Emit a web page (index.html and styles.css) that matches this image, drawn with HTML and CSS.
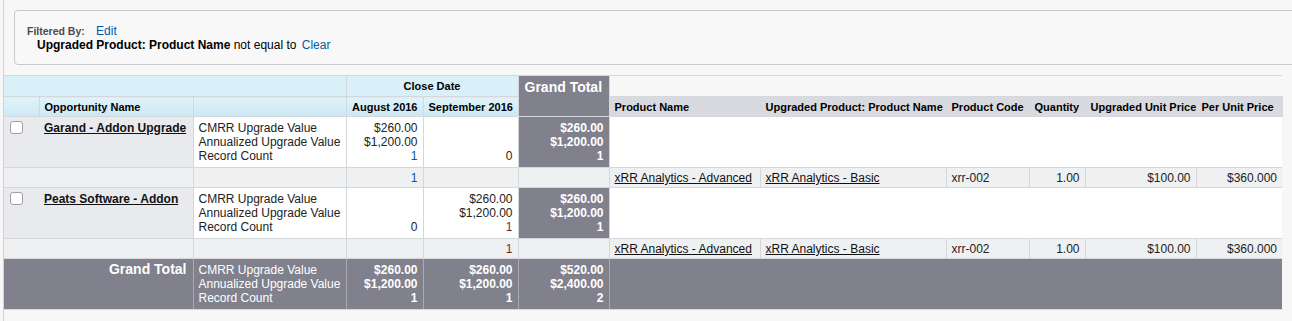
FILE: index.html
```html
<!DOCTYPE html>
<html>
<head>
<meta charset="utf-8">
<link rel="stylesheet" href="styles.css">
</head>
<body>
<div class="page">
  <div class="filter-box">
    <div class="filter-line1"><span class="filter-label">Filtered By:</span> <a class="link">Edit</a></div>
    <div class="filter-line2"><b>Upgraded Product: Product Name</b> not equal to <a class="link">Clear</a></div>
  </div>

  <table class="report">
    <colgroup>
      <col style="width:35px"><col style="width:154px"><col style="width:153px"><col style="width:77px"><col style="width:95px"><col style="width:91px"><col style="width:151px"><col style="width:186px"><col style="width:83px"><col style="width:56px"><col style="width:111px"><col style="width:86px">
    </colgroup>
    <tr class="h1">
      <th colspan="3" class="blue"></th>
      <th colspan="2" class="blue center">Close Date</th>
      <th rowspan="2" class="gt-head">Grand Total</th>
      <th colspan="6" class="empty-head"></th>
    </tr>
    <tr class="h2">
      <th class="blue"></th>
      <th class="blue left">Opportunity Name</th>
      <th class="blue"></th>
      <th class="blue right">August 2016</th>
      <th class="blue right">September 2016</th>
      <th class="grey left">Product Name</th>
      <th class="grey left">Upgraded Product: Product Name</th>
      <th class="grey left">Product Code</th>
      <th class="grey left">Quantity</th>
      <th class="grey left">Upgraded Unit Price</th>
      <th class="grey left">Per Unit Price</th>
    </tr>
    <tr class="data">
      <td class="chk"><span class="checkbox"></span></td>
      <td class="opp"><a class="opp-link">Garand - Addon Upgrade</a></td>
      <td class="labels">CMRR Upgrade Value<br>Annualized Upgrade Value<br>Record Count</td>
      <td class="num">$260.00<br>$1,200.00<br><span class="blue-num">1</span></td>
      <td class="num"><br><br>0</td>
      <td class="num gt">$260.00<br>$1,200.00<br>1</td>
      <td colspan="6" class="blank"></td>
    </tr>
    <tr class="sub">
      <td colspan="2"></td>
      <td></td>
      <td class="num"><span class="blue-num">1</span></td>
      <td></td>
      <td></td>
      <td><a class="plink">xRR Analytics - Advanced</a></td>
      <td><a class="plink">xRR Analytics - Basic</a></td>
      <td>xrr-002</td>
      <td class="num">1.00</td>
      <td class="num">$100.00</td>
      <td class="num">$360.000</td>
    </tr>
    <tr class="data">
      <td class="chk"><span class="checkbox"></span></td>
      <td class="opp"><a class="opp-link">Peats Software - Addon</a></td>
      <td class="labels">CMRR Upgrade Value<br>Annualized Upgrade Value<br>Record Count</td>
      <td class="num"><br><br>0</td>
      <td class="num">$260.00<br>$1,200.00<br><span class="red-num">1</span></td>
      <td class="num gt">$260.00<br>$1,200.00<br>1</td>
      <td colspan="6" class="blank"></td>
    </tr>
    <tr class="sub">
      <td colspan="2"></td>
      <td></td>
      <td></td>
      <td class="num"><span class="red-num">1</span></td>
      <td></td>
      <td><a class="plink">xRR Analytics - Advanced</a></td>
      <td><a class="plink">xRR Analytics - Basic</a></td>
      <td>xrr-002</td>
      <td class="num">1.00</td>
      <td class="num">$100.00</td>
      <td class="num">$360.000</td>
    </tr>
    <tr class="total">
      <td colspan="2" class="total-label">Grand Total</td>
      <td class="tl">CMRR Upgrade Value<br>Annualized Upgrade Value<br>Record Count</td>
      <td class="num b">$260.00<br>$1,200.00<br>1</td>
      <td class="num b">$260.00<br>$1,200.00<br>1</td>
      <td class="num b">$520.00<br>$2,400.00<br>2</td>
      <td colspan="6" class="total-rest"></td>
    </tr>
  </table>
</div>
</body>
</html>
```

FILE: styles.css
```css
html, body {
  margin: 0;
  padding: 0;
  background: #f7f7f7;
  overflow: hidden;
}
body {
  font-family: "Liberation Sans", Arial, sans-serif;
  font-size: 12px;
  color: #222;
}
.page {
  margin-left: 3px;
  border-left: 1px solid #d2d2d2;
  min-height: 321px;
  padding-top: 10px;
}
.filter-box {
  margin-left: 10px;
  margin-right: -30px;
  height: 53px;
  border: 1px solid #c9c9c9;
  border-radius: 4px;
  background: #f8f8f8;
  box-sizing: content-box;
  padding: 0 0 0 12px;
}
.filter-line1 {
  padding-top: 13px;
  height: 14px;
  line-height: 14px;
  color: #333;
}
.filter-label {
  font-weight: bold;
  font-size: 10.5px;
  color: #4a4a56;
  margin-right: 6px;
}
.filter-line2 {
  padding-left: 10px;
  line-height: 14px;
  color: #000;
}
.link {
  color: #015ba7;
  text-decoration: none;
  margin-left: 2px;
}
.report {
  margin-top: 10px;
  border-collapse: collapse;
  table-layout: fixed;
  width: 1278px;
  line-height: 14px;
}
.report th, .report td {
  padding: 0 5px;
  vertical-align: top;
  white-space: nowrap;
  overflow: hidden;
}
.report th {
  font-size: 11px;
  font-weight: bold;
  color: #000;
}
.h1 th {
  height: 21px;
  box-sizing: border-box;
  padding-top: 3px;
  border-top: 1px solid #d4d8dc;
}
.h2 th {
  height: 20px;
  box-sizing: border-box;
  padding-top: 3px;
  vertical-align: top;
  border: 1px solid #d4d8dc;
}
.h2 th:first-child { border-left: none; }
.blue {
  background: linear-gradient(#e0f3fa, #cbe9f4);
}
.h1 th.blue {
  background: #d9f0f8;
}
.grey {
  background: #d8dadf;
}
.center { text-align: center; }
.left { text-align: left; }
.right { text-align: right; }
.h1 th.center {
  border-left: 1px solid #d4d8dc;
  border-bottom: 1px solid #d4d8dc;
}
.gt-head {
  background: #80818d;
  color: #fff !important;
  font-size: 14px !important;
  text-align: left;
  padding-top: 4px !important;
  padding-left: 6px !important;
  border-left: 1px solid #d4d8dc;
  border-right: 1px solid #d4d8dc;
  vertical-align: top;
}
.empty-head {
  background: transparent;
}
.data td {
  padding-top: 4px;
  padding-bottom: 4px;
  background: #fff;
  border: 1px solid #d4d8dc;
  color: #222;
}
.data td.chk {
  background: #e9eaee;
  border-right: none;
  border-left: none;
  padding-left: 6px;
}
.data td.opp {
  background: #e9eaee;
  border-left: none;
}
.checkbox {
  display: block;
  width: 11px;
  height: 11px;
  border: 1px solid #a0a0a0;
  border-radius: 3px;
  background: #fff;
}
.opp-link {
  font-weight: bold;
  color: #111;
  text-decoration: underline;
}
.labels { color: #222; }
.num { text-align: right; }
.data td.gt {
  background: #80818d;
  color: #fff;
  font-weight: bold;
}
.data td.blank {
  border-left: 1px solid #d4d8dc;
  border-right: none;
}
.blue-num { color: #015ba7; }
.red-num { color: #6a2d2d; }
.sub td {
  padding-top: 3px;
  padding-bottom: 2px;
  background: #eff0f2;
  border: 1px solid #d4d8dc;
  color: #222;
}
.sub td:first-child { border-left: none; }
.sub td:last-child { border-right: none; }
.plink {
  color: #111;
  text-decoration: underline;
}
.total td {
  padding-top: 4px;
  padding-bottom: 4px;
  background: #80818d;
  color: #fff;
  border-left: 1px solid #a9abb4;
  border-right: 1px solid #a9abb4;
  border-bottom: 1px solid #d4d8dc;
}
.total td:first-child { border-left: none; }
.total td.total-rest { border-right: none; }
.total-label {
  text-align: right;
  font-weight: bold;
  font-size: 14px;
  padding-top: 3px !important;
  padding-right: 6px !important;
}
.tl { font-size: 12px; }
.b { font-weight: bold; }
```
